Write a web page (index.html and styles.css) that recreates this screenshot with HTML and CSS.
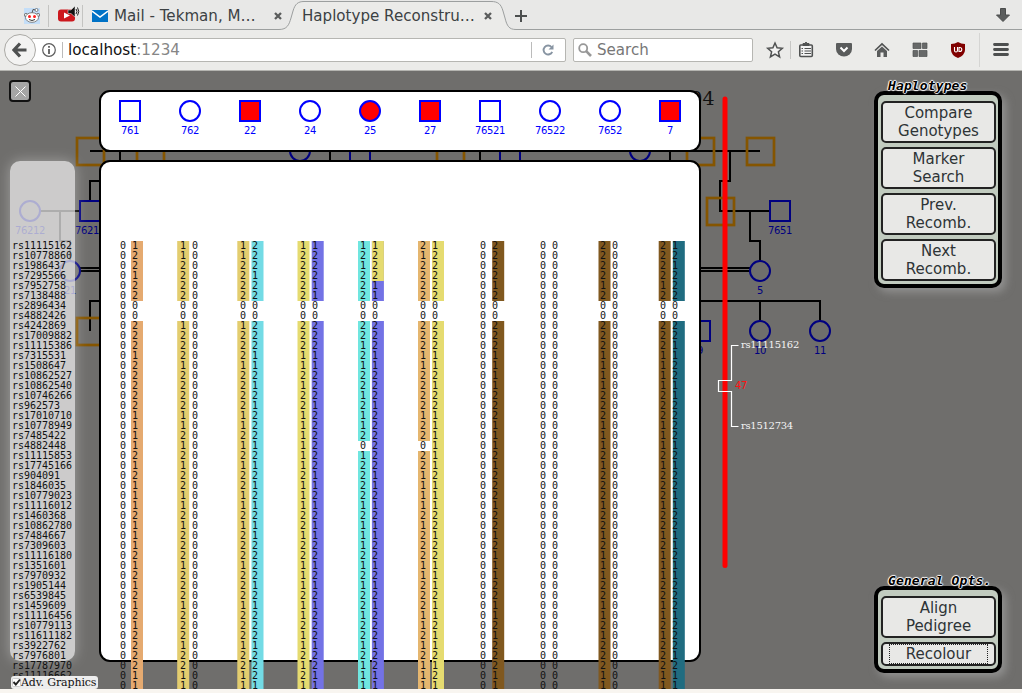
FILE: index.html
```html
<!DOCTYPE html>
<html lang="en">
<head>
<meta charset="utf-8">
<title>Haplotype Reconstruction</title>
<link rel="stylesheet" href="styles.css">
</head>
<body>
<header class="browser">
  <div class="tabs">
    <svg class="tab-shape" width="1022" height="30" viewBox="0 0 1022 30">
      <path d="M0 29.500H279C287 29.500 289 25 291 18L293 11C295 4 298 1.500 304 1.500H491C498 1.500 501 4 503 11L505 18C507 26 509 29.500 516 29.500H1022V30H0Z" fill="#ebebe9"/>
      <path d="M0 29.500H279C287 29.500 289 25 291 18L293 11C295 4 298 1.500 304 1.500H491C498 1.500 501 4 503 11L505 18C507 26 509 29.500 516 29.500H1022" fill="none" stroke="#9c9f9f"/>
      <path d="M48.500 5V27M82.500 5V27" stroke="#c4c4c2"/>
    </svg>
    <svg class="ico reddit" width="16" height="16" viewBox="0 0 16 16"><rect width="16" height="16" fill="#c4def8"/><path d="M8 5L9 1.500L12 2" fill="none" stroke="#555"/><circle cx="12.500" cy="2" r="1.500" fill="#fff" stroke="#666" stroke-width=".8"/><circle cx="2" cy="7" r="1.700" fill="#eee" stroke="#666" stroke-width=".8"/><circle cx="14" cy="7" r="1.700" fill="#eee" stroke="#666" stroke-width=".8"/><ellipse cx="8" cy="9.500" rx="6.500" ry="4.800" fill="#fff" stroke="#666" stroke-width=".8"/><circle cx="5.500" cy="8.500" r="1.500" fill="#f22"/><circle cx="10.500" cy="8.500" r="1.500" fill="#f22"/><path d="M5 11.500Q8 13.500 11 11.500" fill="none" stroke="#333"/></svg>
    <svg class="ico youtube" width="22" height="18" viewBox="0 0 22 18"><rect y="4.500" width="17" height="12" rx="3" fill="#cc181e"/><path d="M6 7.500L12 10.500L6 13.500Z" fill="#fff"/><path d="M10 5H13L17 1V12L13 8.500H10Z" fill="#111" stroke="#eee" stroke-width=".5"/><path d="M18 4Q20 6.500 18 9M19.500 2.500Q22 6.500 19.500 10.500" fill="none" stroke="#222"/></svg>
    <svg class="ico mail" width="16" height="12" viewBox="0 0 16 12"><rect width="16" height="12" fill="#0072c6"/><path d="M0 1L8 7L16 1" fill="none" stroke="#fff" stroke-width="1.500"/></svg>
    <span class="tab-title t1">Mail - Tekman, M…</span>
    <svg class="ico x1" width="8" height="8" viewBox="0 0 8 8"><path d="M1 1L7 7M7 1L1 7" stroke="#5a5c5c" stroke-width="2.300"/></svg>
    <span class="tab-title t2">Haplotype Reconstru…</span>
    <svg class="ico x2" width="8" height="8" viewBox="0 0 8 8"><path d="M1 1L7 7M7 1L1 7" stroke="#5a5c5c" stroke-width="2.300"/></svg>
    <svg class="ico plus" width="12" height="12" viewBox="0 0 12 12"><path d="M6 0V12M0 6H12" stroke="#4c4f4f" stroke-width="2"/></svg>
    <svg class="ico down" width="14" height="14" viewBox="0 0 14 14"><path d="M4.500 .5H9.500V7H13.500L7 13.500L.5 7H4.500Z" fill="#5b5d5d" stroke="#4a4c4c"/></svg>
  </div>
  <div class="nav">
    <div class="back"><svg width="16" height="16" viewBox="0 0 16 16"><path d="M8 1.500L2 8L8 14.500M2.500 8H14.500" fill="none" stroke="#4f5151" stroke-width="3.200"/></svg></div>
    <div class="url">
      <svg width="14" height="14" viewBox="0 0 14 14"><circle cx="7" cy="7" r="6.300" fill="none" stroke="#5c5c5c" stroke-width="1.200"/><path d="M7 6V11M7 3V4.800" stroke="#5c5c5c" stroke-width="1.800"/></svg>
      <i class="bar"></i>
      <span class="host">localhost<span class="port">:1234</span></span>
      <i class="bar end"></i>
      <svg class="reload" width="12" height="12" viewBox="0 0 12 12"><path d="M9.500 3A4.500 4.500 0 1 0 10.200 7.800" fill="none" stroke="#8794a2" stroke-width="1.900"/><path d="M11.500 .5V5.500H6.500Z" fill="#8794a2"/></svg>
    </div>
    <div class="search">
      <svg width="14" height="14" viewBox="0 0 14 14"><circle cx="5.200" cy="5.200" r="4" fill="none" stroke="#989898" stroke-width="1.800"/><path d="M8.200 8.200L13 13" stroke="#989898" stroke-width="2.600"/></svg>
      <span>Search</span>
    </div>
    <svg class="tools" width="269" height="40" viewBox="753 30 269 40">
      <path d="M775 43L777.100 47.800L782.300 48.300L778.400 51.800L779.600 57L775 54.200L770.400 57L771.600 51.800L767.700 48.300L772.900 47.800Z" fill="#fff" fill-opacity=".4" stroke="#505252" stroke-width="1.500"/>
      <path d="M790.500 41V59" stroke="#c6c6c4"/>
      <rect x="799.800" y="45" width="12.500" height="11.500" rx="1" fill="#f4f4f4" stroke="#505252" stroke-width="1.600"/><path d="M803 45.500V43.500H805L806 42L807 43.500H809V45.500Z" fill="#505252" stroke="#505252"/><path d="M804.500 48.500H811M804.500 51H811M804.500 53.500H811M801.500 48.500H803M801.500 51H803M801.500 53.500H803" stroke="#505252" stroke-width="1.200"/>
      <path d="M837 43H851Q852 43 852 44V49A8 7.500 0 0 1 836 49V44Q836 43 837 43Z" fill="#5a5c5c"/><path d="M840.500 47.500L844 51L847.500 47.500" fill="none" stroke="#fff" stroke-width="2"/>
      <path d="M875 50.500L882 44L889 50.500" fill="none" stroke="#505252" stroke-width="1.700"/><path d="M877 51L882 46.500L887 51V57H883.500V52.500H880.500V57H877Z" fill="#5a5c5c"/>
      <path d="M913 43H921V48.500H913ZM922.500 43H927V48.500H922.500ZM913 50.500H917.500V56.500H913ZM919 50.500H927V56.500H919Z" fill="#676969" stroke="#4e5050" stroke-width=".7"/>
      <path d="M958 42Q961 44 965 44V50Q965 55 958 58Q951 55 951 50V44Q955 44 958 42Z" fill="#800000"/><path d="M954.500 47V50.500Q954.500 52 956 52T957.500 50.500V47M959 47.500V51.500H959.700Q961.800 51.500 961.800 49.500T959.700 47.500Z" fill="none" stroke="#fff" stroke-width="1.100"/>
      <path d="M979.500 33V67" stroke="#d5d5d3"/>
      <path d="M994.500 44.500H1007.500M994.500 49.500H1007.500M994.500 54.500H1007.500" stroke="#4d4f4f" stroke-width="2.800" stroke-linecap="round"/>
    </svg>
  </div>
</header>
<main class="stage">
  <svg class="canvas" width="1022" height="618" viewBox="0 71 1022 618">
    <g class="links">
      <path d="M90 151H760M120 151V181M330 151V181M480 151V181M670 151V181M730 151V181H720V211H770M750 211V241H760V261"/>
      <path d="M40 211H80M60 211V241H70V261M120 181H90V201M80 268H751M80 271H750M90 331V301H820V321M760 301V321M700 301V321"/>
    </g>
    <g class="orange">
      <rect x="77" y="138" width="27" height="27"/><rect x="137" y="138" width="27" height="27"/><rect x="437" y="138" width="27" height="27"/><rect x="687" y="138" width="27" height="27"/><rect x="747" y="138" width="27" height="27"/><rect x="707" y="198" width="27" height="27"/><rect x="77" y="318" width="27" height="27"/>
    </g>
    <g class="kin">
      <circle cx="300" cy="151" r="10"/><circle cx="640" cy="151" r="10"/><rect x="350" y="141" width="20" height="20"/><rect x="500" y="141" width="20" height="20"/>
      <circle cx="30" cy="211" r="10"/><rect x="80" y="201" width="20" height="20"/><circle cx="70" cy="271" r="10"/><rect x="770" y="201" width="20" height="20"/><circle cx="760" cy="271" r="10"/><circle cx="760" cy="331" r="10"/><circle cx="820" cy="331" r="10"/><rect x="690" y="321" width="20" height="20"/>
    </g>
    <g class="kin-label">
      <text x="30" y="234">76212</text><text x="90" y="234">76211</text><text x="70" y="294">21</text><text x="780" y="234">7651</text><text x="760" y="294">5</text><text x="760" y="354">10</text><text x="820" y="354">11</text><text x="700" y="354">9</text>
    </g>
    <text class="family" x="714.500" y="105">04</text>
    <path d="M725 99V565.500" stroke="#f00" stroke-width="5" stroke-linecap="round"/>
    <path d="M738.500 345.500H731.500V380.500H718.500V391.500H731.500V426.500H738.500" fill="none" stroke="#fff" stroke-width="1.200"/>
    <text class="range" x="741" y="348">rs11115162</text><text class="range" x="741" y="429">rs1512734</text>
    <text class="count" x="735" y="389">47</text>
    <rect class="panel" x="100" y="91" width="600" height="60" rx="10"/>
    <rect class="panel" x="100" y="161" width="600" height="500" rx="10"/>
  </svg>
  <ol class="markers" id="markers"></ol>
  <svg class="canvas" id="haplo" width="1022" height="618" viewBox="0 71 1022 618"></svg>
  <button class="close"><svg width="11" height="11" viewBox="0 0 11 11"><path d="M.5 .5L10.500 10.500M10.500 .5L.5 10.500" stroke="#fff" stroke-width="1"/></svg></button>
  <section class="menu haplotypes"><h2>Haplotypes</h2>
    <button>Compare<br>Genotypes</button><button>Marker<br>Search</button><button>Prev.<br>Recomb.</button><button>Next<br>Recomb.</button>
  </section>
  <section class="menu general"><h2>General Opts.</h2>
    <button>Align<br>Pedigree</button><button class="focused"><span>Recolour</span></button>
  </section>
  <label class="adv"><svg width="9" height="9" viewBox="0 0 9 9"><rect x=".5" y=".5" width="8" height="8" rx="1" fill="#fff" stroke="#ccc"/><path d="M1.500 4L3.800 6.500L8 1.500" fill="none" stroke="#222" stroke-width="1.900"/></svg><span>Adv. Graphics</span></label>
</main>
<script src="app.js"></script>
</body>
</html>
```
FILE: styles.css
```css
body { margin: 0; width: 1022px; height: 693px; overflow: hidden; background: #f8f5f0; font-family: "DejaVu Sans", sans-serif; }
button { font: inherit; padding: 0; }
.browser { height: 71px; color: #2e3436; }
.tabs { height: 30px; display: flex; align-items: flex-start; position: relative; background: #e8e8e7; }
.tab-shape { position: absolute; left: 0; top: 0; }
.ico { position: relative; flex: none; }
.reddit { margin: 8px 0 0 24px; }
.youtube { margin: 5px 0 0 18px; }
.mail { margin: 10px 0 0 12px; }
.tab-title { position: relative; font-size: 15.1px; line-height: 18px; margin-top: 7px; white-space: nowrap; color: #3c4143; }
.t1 { margin-left: 6px; width: 160px; }
.x1 { margin-top: 12px; }
.t2 { margin-left: 20px; width: 182px; }
.x2 { margin-top: 12px; }
.plus { margin: 10px 0 0 23px; }
.down { margin: 8px 0 0 469px; }
.nav { height: 41px; display: flex; align-items: center; background: #ebebe9; border-bottom: 1px solid #b4b4b0; box-sizing: border-box; }
.back { flex: none; width: 30px; height: 30px; margin-left: 4px; border: 1px solid #aaa9a5; border-radius: 50%; background: #f3f3f2; display: flex; align-items: center; justify-content: center; z-index: 1; }
.url { flex: none; width: 535px; height: 24px; margin-left: -5px; box-sizing: border-box; border: 1px solid #b6b6b2; border-radius: 2px; background: #fff; display: flex; align-items: center; padding-left: 10px; font-size: 15.2px; }
.bar { width: 1px; height: 16px; background: #bbb; margin: 0 5px 0 6px; }
.host { color: #111; flex: 1; }
.port { color: #868686; }
.reload { margin: 0 11px 0 5px; }
.search { flex: none; width: 180px; height: 24px; margin-left: 7px; box-sizing: border-box; border: 1px solid #b6b6b2; border-radius: 2px; background: #fff; display: flex; align-items: center; gap: 5px; padding-left: 4px; font-size: 15.100px; color: #777; }
.tools { flex: none; }
.stage { position: relative; height: 618px; overflow: hidden; background: #6f6e6c; }
.canvas { position: absolute; left: 0; top: 0; }
.links { fill: none; stroke: #000; stroke-width: 2; }
.orange { fill: none; stroke: #855500; stroke-width: 2.700; }
.kin { fill: none; stroke: #000080; stroke-width: 2; }
.kin-label, .person-label { font: 10px "DejaVu Sans", sans-serif; letter-spacing: -.36px; text-anchor: middle; fill: #000080; }
.person-label { fill: #00f; }
.family { font: 19px "DejaVu Serif", serif; text-anchor: end; fill: #111; }
.range { font: 10px "DejaVu Serif", serif; letter-spacing: -.28px; fill: #f4f4f4; }
.count { font: 10px "DejaVu Sans", sans-serif; letter-spacing: -.36px; fill: #f11; }
.panel { fill: #fff; stroke: #000; stroke-width: 2; }
.person { fill: #fff; stroke: #00f; stroke-width: 2; }
.affected { fill: #f00; }
.allele { font: 10px "DejaVu Sans Mono", monospace; fill: #111; }
.markers { position: absolute; left: 10px; top: 90px; width: 65px; height: 500px; box-sizing: border-box; margin: 0; padding: 80px 0 0 2px; list-style: none; border-radius: 10px; background: rgba(240,240,240,.72); box-shadow: 0 0 14px rgba(255,255,255,.35); font: 10px/10px "DejaVu Sans Mono", monospace; letter-spacing: -.02px; color: #111; white-space: nowrap; }
.close { position: absolute; left: 9px; top: 9px; width: 22px; height: 22px; box-sizing: border-box; border: 2px solid #111; border-radius: 4px; background: #a5a5a5; display: flex; align-items: center; justify-content: center; }
.menu { position: absolute; left: 874px; width: 128px; box-sizing: border-box; border: 4px solid #000; border-radius: 10px; background: #c1cbbf; padding: 6px 2px 3px 3px; display: flex; flex-direction: column; gap: 4px; box-shadow: 4px 4px 8px rgba(170,170,170,.6); }
.haplotypes { top: 20px; height: 197px; }
.general { top: 515px; height: 87px; }
.menu h2 { position: absolute; left: 10px; top: -17px; margin: 0; font: italic bold 13px/16px "DejaVu Sans Mono", monospace; letter-spacing: .12px; color: #000; text-shadow: 0 0 1px #fff, 1px 0 1px #fff, -1px 0 1px #fff, 0 1px 1px #fff, 0 -1px 1px #fff; white-space: nowrap; }
.menu button { height: 42px; flex: none; box-sizing: border-box; border: 2px solid #222; border-radius: 5px; background: #e8e8e6; font-size: 15px; line-height: 18px; color: #2e3436; text-align: center; }
.menu button.focused { height: 24px; }
.focused span { display: block; box-sizing: border-box; width: 99px; height: 20px; margin: 0 auto; border: 1px dotted #222; }
.adv { position: absolute; left: 11px; top: 605px; width: 87px; height: 13px; display: flex; align-items: center; padding-left: 1px; box-sizing: border-box; border-radius: 3px; background: #ededed; font: 11px/13px "DejaVu Serif", serif; letter-spacing: -.12px; color: #111; white-space: nowrap; }
```
FILE: app.js
```js
const markers = `rs11115162 rs10778860 rs1986437 rs7295566 rs7952758 rs7138488 rs2896434 rs4882426 rs4242869 rs17009882 rs11115386 rs7315531 rs1508647 rs10862527 rs10862540 rs10746266 rs962573 rs17010710 rs10778949 rs7485422 rs4882448 rs11115853 rs17745166 rs904091 rs1846035 rs10779023 rs11116012 rs1460368 rs10862780 rs7484667 rs7309603 rs11116180 rs1351601 rs7970932 rs1905144 rs6539845 rs1459609 rs11116456 rs10779113 rs11611182 rs3922762 rs7976801 rs17787970 rs11116662`.split(' ');
document.getElementById('markers').innerHTML = markers.map(m => `<li>${m}</li>`).join('');

const none = '0'.repeat(45);
const A = '11222200' + '122212222112121221' + '1212221222122212211';
const B = '12222200' + '222112122111111211' + '1221221112112112121';
const C = '12221100' + '222112221222222112' + '1211221212122212211';
const D = '22221200' + '222111122211121222' + '1221211122112122211';

// Each strand: alleles, bar x, bar colour
const people = [
  ['761', 'm', 0, [none], ['12212200' + '222122222111121211' + '1211121212121222211', 131, '#e5aa70']],
  ['762', 'f', 0, [A, 177.200, '#e3cd6f'], [none]],
  ['22', 'm', 1, [A, 237.300, '#e3cd6f'], ['22212200' + '222112121222121212' + '1211222212122212221', 251.500, '#73dbe5']],
  ['24', 'f', 0, [B, 297.500, '#e5db70'], [C, 311.700, '#7372e5']],
  ['25', 'f', 1, ['12122200' + '221212212112012222' + '1211121212212212111', 358, '#70e6e0'], [C, 371.900, '#7372e5']],
  ['27', 'm', 1, ['21222200' + '222112222122022111' + '1212221122211212111', 418, '#e5b66f'], [B, 432, '#e5db70']],
  ['76521', 'm', 0, [none], [D, 492.200, '#80581f']],
  ['76522', 'f', 0, [none], [none]],
  ['7652', 'f', 0, [D, 598.500, '#80581f'], [none]],
  ['7', 'm', 1, [D, 658.700, '#80581f'], ['12122200' + '221122112222121221' + '1221121122212221211', 672.800, '#206c80']]
];

let out = '';
people.forEach(([name, sex, affected, ...strands], i) => {
  const cx = 130 + 60 * i;
  const cls = 'person' + (affected ? ' affected' : '');
  out += sex === 'm' ? `<rect class="${cls}" x="${cx - 10}" y="101" width="20" height="20"/>` : `<circle class="${cls}" cx="${cx}" cy="111" r="10"/>`;
  out += `<text class="person-label" x="${cx}" y="134">${name}</text>`;
  strands.forEach(([alleles, x, colour], s) => {
    if (colour) {
      for (const run of alleles.matchAll(/[12]+/g)) {
        const split = name === '25' && s === 1 && run.index === 0;
        const y = 241 + run.index * 10;
        out += `<rect x="${x}" y="${y}" width="12" height="${run[0].length * 10}" fill="${colour}"/>`;
        if (split) out += `<rect x="${x}" y="${y}" width="12" height="40" fill="#e5db70"/>`;
      }
    }
    [...alleles].forEach((a, r) => {
      out += `<text class="allele" x="${cx - 10 + 12 * s}" y="${249 + 10 * r}">${a}</text>`;
    });
  });
});
document.getElementById('haplo').innerHTML = out;
```
